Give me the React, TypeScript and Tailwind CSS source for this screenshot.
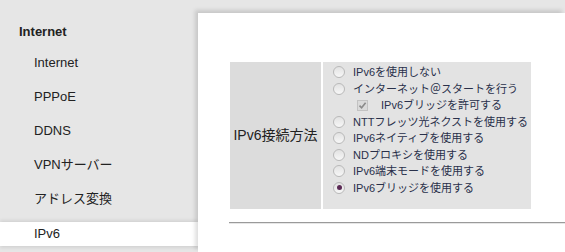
import React from "react";

const MENU = ["Internet", "PPPoE", "DDNS", "VPNサーバー", "アドレス変換"];

const OPTIONS: { label: string; kind: "radio" | "check"; checked?: boolean }[] = [
  { label: "IPv6を使用しない", kind: "radio" },
  { label: "インターネット＠スタートを行う", kind: "radio" },
  { label: "IPv6ブリッジを許可する", kind: "check", checked: true },
  { label: "NTTフレッツ光ネクストを使用する", kind: "radio" },
  { label: "IPv6ネイティブを使用する", kind: "radio" },
  { label: "NDプロキシを使用する", kind: "radio" },
  { label: "IPv6端末モードを使用する", kind: "radio" },
  { label: "IPv6ブリッジを使用する", kind: "radio", checked: true },
];

function Radio({ checked }: { checked?: boolean }) {
  return (
    <span className="w-[12px] h-[12px] rounded-full border border-[#b9b9b9] bg-gradient-to-b from-[#e2e2e2] to-[#f7f7f7] flex items-center justify-center shrink-0">
      {checked && <span className="w-[5px] h-[5px] rounded-full bg-[#5b2a55]" />}
    </span>
  );
}

function Check() {
  return (
    <span className="w-[11px] h-[11px] border border-[#c2c2c2] bg-[#dadada] flex items-center justify-center shrink-0">
      <svg width="9" height="9" viewBox="0 0 9 9">
        <path d="M1.5 4.6 L3.6 6.8 L7.6 1.8" fill="none" stroke="#8a8a8a" strokeWidth="1.6" />
      </svg>
    </span>
  );
}

export default function App() {
  return (
    <div
      className="w-[565px] h-[252px] bg-[#e6e6e6] flex overflow-hidden text-[#222]"
      style={{ fontFamily: '"Liberation Sans", "Noto Sans CJK JP", sans-serif' }}
    >
      {/* Sidebar */}
      <div className="w-[198px] shrink-0 pt-[22px]">
        <div className="pl-[19px] h-[20px] flex items-center text-[13px] font-bold">Internet</div>
        <div className="mt-[4px]">
          {MENU.map((m) => (
            <div key={m} className="h-[34px] pl-[34px] flex items-center text-[13px]">
              {m}
            </div>
          ))}
          <div className="mt-[6px] h-[24px] pl-[34px] flex items-center text-[13px] bg-white shadow-[0_-2px_3px_rgba(0,0,0,0.08),0_2px_3px_rgba(0,0,0,0.08)]">
            IPv6
          </div>
        </div>
      </div>

      {/* Main panel */}
      <div className="flex-1 mt-[13px] bg-white shadow-[-3px_-3px_4px_rgba(0,0,0,0.13)] pl-[32px] pt-[49px]">
        <div className="flex gap-[2px] w-[301px]">
          <div className="w-[91px] bg-[#dcdcdc] flex items-center justify-center text-[14px] text-[#222]">
            IPv6接続方法
          </div>
          <div className="flex-1 bg-[#e3e3e3] pt-[2px] pb-[13px] pl-[10px]">
            {OPTIONS.map((o) =>
              o.kind === "radio" ? (
                <div key={o.label} className="h-[16.5px] flex items-center gap-[8px] text-[11px] text-[#29304a]">
                  <Radio checked={o.checked} />
                  <span>{o.label}</span>
                </div>
              ) : (
                <div key={o.label} className="h-[16.5px] flex items-center gap-[13px] pl-[24px] text-[11px] text-[#29304a]">
                  <Check />
                  <span>{o.label}</span>
                </div>
              )
            )}
          </div>
        </div>
        <div className="mt-[13px] -ml-[1px] border-t border-[#9a9a9a] border-b border-b-[#e6e6e6]" />
      </div>
    </div>
  );
}
